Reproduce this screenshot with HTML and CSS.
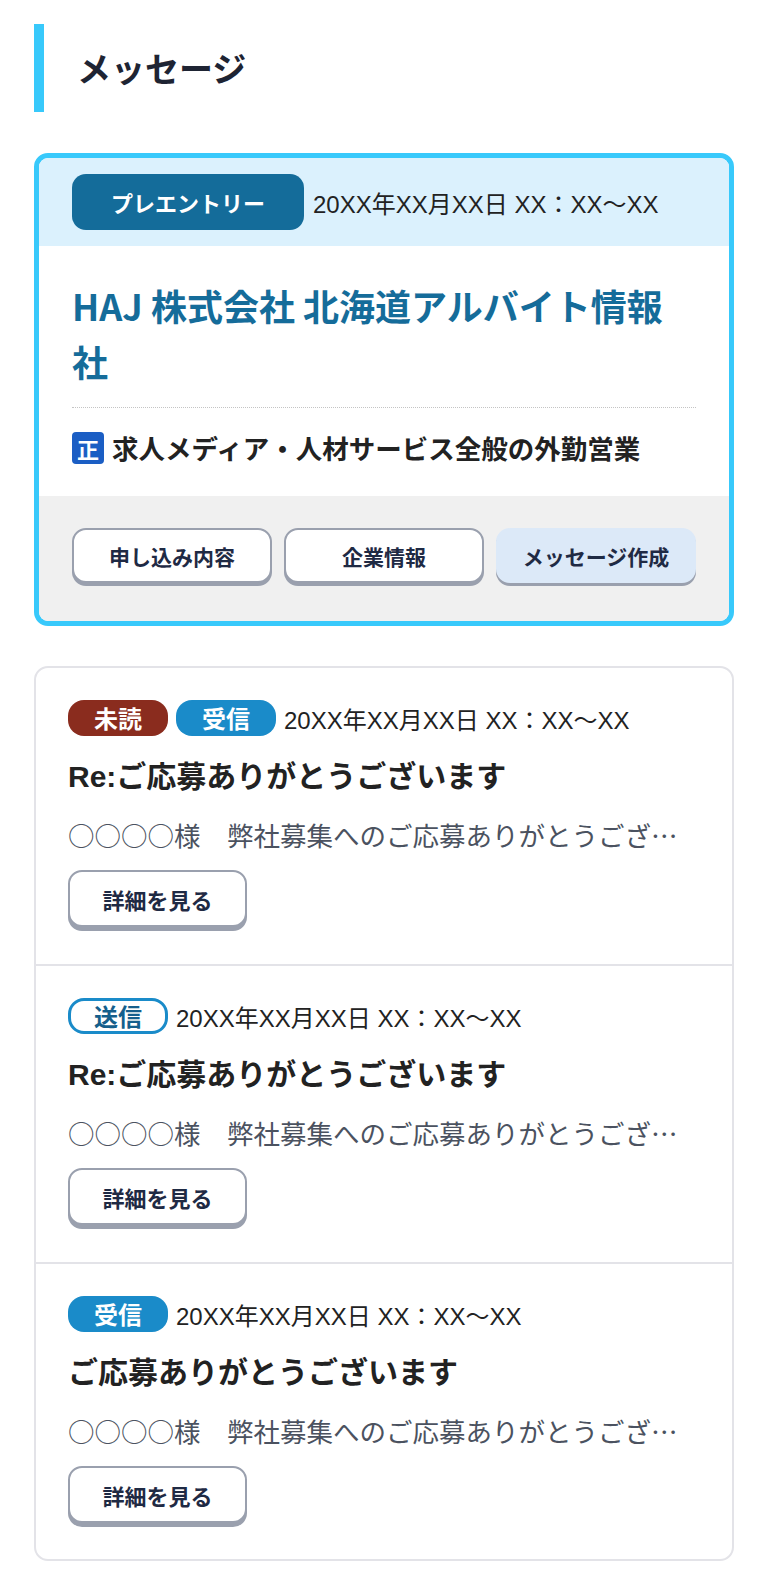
FILE: index.html
```html
<!DOCTYPE html>
<html lang="ja">
<head>
<meta charset="utf-8">
<title>メッセージ</title>
<link rel="stylesheet" href="styles.css">
</head>
<body>
<main class="page">
  <h1 class="page-title">メッセージ</h1>

  <section class="entry-card">
    <div class="entry-head">
      <span class="entry-badge">プレエントリー</span>
      <span class="date">20XX年XX月XX日 XX：XX〜XX</span>
    </div>
    <div class="entry-body">
      <h2 class="company">HAJ 株式会社 北海道アルバイト情報社</h2>
      <div class="job">
        <span class="job-icon">正</span>
        <span class="job-title">求人メディア・人材サービス全般の外勤営業</span>
      </div>
    </div>
    <div class="entry-actions">
      <a class="btn" href="#">申し込み内容</a>
      <a class="btn" href="#">企業情報</a>
      <a class="btn btn-primary" href="#">メッセージ作成</a>
    </div>
  </section>

  <ul class="msg-list">
    <li class="msg">
      <div class="msg-meta">
        <span class="tag tag-unread">未読</span>
        <span class="tag tag-recv">受信</span>
        <span class="date">20XX年XX月XX日 XX：XX〜XX</span>
      </div>
      <h3 class="msg-subject">Re:ご応募ありがとうございます</h3>
      <p class="msg-preview">○○○○様　弊社募集へのご応募ありがとうござ…</p>
      <a class="btn btn-detail" href="#">詳細を見る</a>
    </li>
    <li class="msg">
      <div class="msg-meta">
        <span class="tag tag-sent">送信</span>
        <span class="date">20XX年XX月XX日 XX：XX〜XX</span>
      </div>
      <h3 class="msg-subject">Re:ご応募ありがとうございます</h3>
      <p class="msg-preview">○○○○様　弊社募集へのご応募ありがとうござ…</p>
      <a class="btn btn-detail" href="#">詳細を見る</a>
    </li>
    <li class="msg">
      <div class="msg-meta">
        <span class="tag tag-recv">受信</span>
        <span class="date">20XX年XX月XX日 XX：XX〜XX</span>
      </div>
      <h3 class="msg-subject">ご応募ありがとうございます</h3>
      <p class="msg-preview">○○○○様　弊社募集へのご応募ありがとうござ…</p>
      <a class="btn btn-detail" href="#">詳細を見る</a>
    </li>
  </ul>
</main>
</body>
</html>
```

FILE: styles.css
```css
* {
  box-sizing: border-box;
}

html, body {
  margin: 0;
  padding: 0;
  background: #ffffff;
}

body {
  font-family: "Noto Sans CJK JP", "Noto Sans", sans-serif;
  color: #222222;
}

.page {
  padding: 24px 34px 20px;
}

.page-title {
  margin: 0;
  height: 88px;
  display: flex;
  align-items: center;
  border-left: 10px solid #38c9fb;
  padding-left: 33px;
  font-size: 34px;
  font-weight: 700;
  color: #1e2433;
  line-height: 1;
}

/* entry card */
.entry-card {
  margin-top: 41px;
  border: 5px solid #38c9fb;
  border-radius: 14px;
  overflow: hidden;
}

.entry-head {
  height: 88px;
  background: #dbf1fd;
  padding: 0 33px;
  display: flex;
  align-items: center;
}

.entry-badge {
  height: 56px;
  line-height: 56px;
  padding: 0 39px;
  border-radius: 14px;
  background: #146c9a;
  color: #ffffff;
  font-size: 22px;
  font-weight: 700;
  white-space: nowrap;
}

.date {
  font-family: "Liberation Sans", "Noto Sans CJK JP", sans-serif;
  font-size: 24px;
  color: #222222;
  white-space: nowrap;
}

.entry-head .date {
  margin-left: 9px;
}

.entry-body {
  background: #ffffff;
  padding: 31px 33px 32px;
}

.company {
  margin: 0;
  padding-bottom: 18px;
  border-bottom: 1px dotted #c4c4c4;
  font-size: 36px;
  line-height: 56px;
  font-weight: 700;
  color: #156c9a;
}

.job {
  margin-top: 24px;
  display: flex;
  align-items: center;
  gap: 8px;
}

.job-icon {
  width: 32px;
  height: 32px;
  border-radius: 4px;
  background: #1b5ec4;
  color: #ffffff;
  font-size: 22px;
  font-weight: 700;
  line-height: 32px;
  text-align: center;
  flex: none;
}

.job-title {
  font-size: 26.5px;
  font-weight: 700;
  color: #222222;
  line-height: 32px;
  white-space: nowrap;
}

.entry-actions {
  background: #f0f0f0;
  padding: 32px 33px 38px;
  display: grid;
  grid-template-columns: repeat(3, 1fr);
  gap: 12px;
}

/* buttons */
.btn {
  display: flex;
  align-items: center;
  justify-content: center;
  height: 55px;
  border: 2px solid #9aa0ae;
  border-radius: 14px;
  background: #ffffff;
  box-shadow: 0 3px 0 #9aa0ae;
  color: #1f2a44;
  font-size: 21px;
  font-weight: 700;
  text-decoration: none;
  white-space: nowrap;
}

.btn-primary {
  background: #dce9f8;
  border-color: #dce9f8;
}

/* message list */
.msg-list {
  list-style: none;
  margin: 40px 0 0;
  padding: 0;
  border: 2px solid #e3e3e8;
  border-radius: 14px;
}

.msg {
  padding: 32px 32px 37px;
  border-bottom: 2px solid #e3e3e8;
}

.msg:last-child {
  border-bottom: none;
  padding-bottom: 36px;
}

.msg-meta {
  display: flex;
  align-items: center;
  gap: 8px;
  height: 36px;
}

.tag {
  height: 36px;
  line-height: 36px;
  padding: 0 26px;
  border-radius: 16px;
  color: #ffffff;
  font-size: 24px;
  font-weight: 700;
  white-space: nowrap;
}

.tag-unread {
  background: #8a2c1e;
}

.tag-recv {
  background: #1a8bc9;
}

.tag-sent {
  background: #ffffff;
  border: 3px solid #1a8bc9;
  color: #155f8c;
  line-height: 30px;
  padding: 0 23px;
}

.msg-subject {
  margin: 20px 0 0;
  font-family: "Liberation Sans", "Noto Sans CJK JP", sans-serif;
  font-size: 30px;
  line-height: 42px;
  font-weight: 700;
  color: #222222;
}

.msg-preview {
  margin: 17px 0 0;
  font-size: 26.5px;
  line-height: 40px;
  color: #4b5260;
  white-space: nowrap;
  overflow: hidden;
  text-overflow: ellipsis;
}

.btn-detail {
  margin-top: 15px;
  width: 179px;
  height: 57px;
  box-shadow: 0 4px 0 #9aa0ae;
  font-size: 22px;
}
```
